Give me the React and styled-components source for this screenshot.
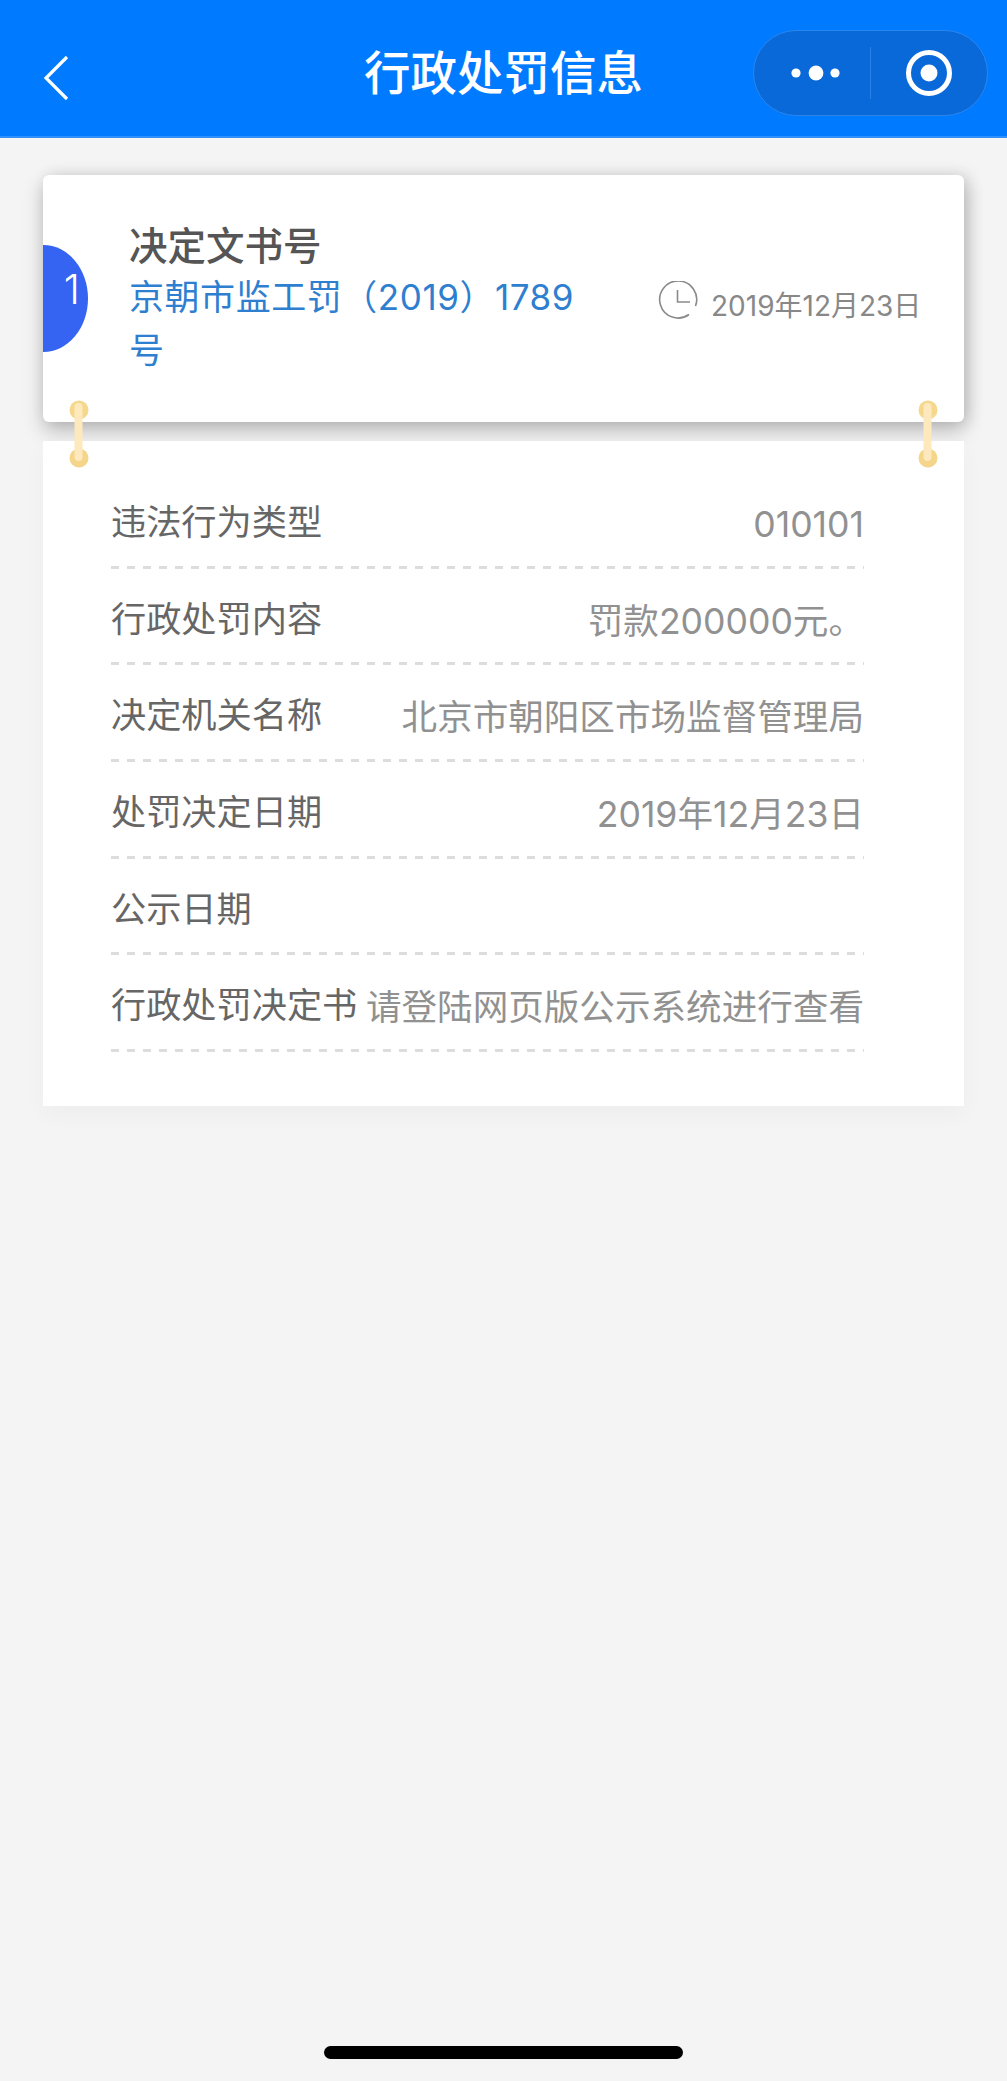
import styled, { createGlobalStyle } from "styled-components";

const rows = [
  ["违法行为类型", "010101"],
  ["行政处罚内容", "罚款200000元。"],
  ["决定机关名称", "北京市朝阳区市场监督管理局"],
  ["处罚决定日期", "2019年12月23日"],
  ["公示日期", ""],
  ["行政处罚决定书", "请登陆网页版公示系统进行查看"],
];

const Ring = ({ side }) => (
  <RingWrap $side={side}>
    <svg width="20" height="68" viewBox="0 0 20 68">
      <circle cx="10" cy="10" r="9.5" fill="#f5d88c" />
      <circle cx="10" cy="58" r="9.5" fill="#f5d58a" />
      <rect x="5.5" y="3" width="8" height="58" rx="4" fill="#fde9bd" />
    </svg>
  </RingWrap>
);

const App = () => {
  return (
    <Page>
      <GlobalStyle />
      <NavBar>
        <BackSlot>
          <svg width="26" height="46" viewBox="0 0 26 46">
            <path d="M24 2 L3 23 L24 44" fill="none" stroke="#fff" strokeWidth="3.2" />
          </svg>
        </BackSlot>
        <NavTitle>行政处罚信息</NavTitle>
        <CapsuleSlot>
          <Capsule>
            <CapsuleHalf>
              <MoreDots width="56" height="20" viewBox="0 0 56 20">
                <circle cx="8" cy="10" r="4.6" fill="#fff" />
                <circle cx="28" cy="10" r="7.4" fill="#fff" />
                <circle cx="47" cy="10" r="4.6" fill="#fff" />
              </MoreDots>
            </CapsuleHalf>
            <CapsuleDivider />
            <CapsuleHalf>
              <svg width="48" height="48" viewBox="0 0 48 48">
                <circle cx="24" cy="24" r="20.5" fill="none" stroke="#fff" strokeWidth="5" />
                <circle cx="24" cy="24" r="8.5" fill="#fff" />
              </svg>
            </CapsuleHalf>
          </Capsule>
        </CapsuleSlot>
      </NavBar>

      <Content>
        <Ring side="left" />
        <Ring side="right" />
        <SummaryCard>
          <IndexBadge>1</IndexBadge>
          <DocColumn>
            <DocLabel>决定文书号</DocLabel>
            <DocNumber>京朝市监工罚（2019）1789号</DocNumber>
          </DocColumn>
          <DateBlock>
            <ClockIcon width="40" height="40" viewBox="0 0 40 40">
              <path
                d="M31 33.5 A18.5 18.5 0 1 1 37.5 25"
                fill="none"
                stroke="#8a8a8a"
                strokeWidth="1.6"
              />
              <path d="M29 34.5 L27.5 35.3" fill="none" stroke="#8a8a8a" strokeWidth="1.6" />
              <path d="M19.5 9 V21 H32" fill="none" stroke="#8a8a8a" strokeWidth="1.6" />
            </ClockIcon>
            <DateText>2019年12月23日</DateText>
          </DateBlock>
        </SummaryCard>

        <DetailPanel>
          {rows.map(([label, value]) => (
            <Row key={label}>
              <RowLabel>{label}</RowLabel>
              <RowValue>{value}</RowValue>
            </Row>
          ))}
        </DetailPanel>
      </Content>

      <HomeIndicator />
    </Page>
  );
};
export default App;

const GlobalStyle = createGlobalStyle`
  body {
    margin: 0;
    background: #f4f4f4;
    font-family: "Inter", "Noto Sans CJK SC", sans-serif;
  }
`;

const Page = styled.div`
  min-height: 2081px;
  display: flex;
  flex-direction: column;
  background: #f4f4f4;
`;

const NavBar = styled.div`
  height: 138px;
  box-sizing: border-box;
  padding: 10px 19px 0 43px;
  display: grid;
  grid-template-columns: 1fr auto 1fr;
  align-items: center;
  background: #007aff;
  border-bottom: 2px solid #2f90fb;
`;

const BackSlot = styled.div`
  display: flex;
  align-items: center;
  margin-top: 10px;
`;

const NavTitle = styled.div`
  font-size: 46.5px;
  line-height: 60px;
  font-weight: 500;
  color: #fff;
  transform: translateX(-12px);
`;

const CapsuleSlot = styled.div`
  display: flex;
  justify-content: flex-end;
`;

const Capsule = styled.div`
  width: 235px;
  height: 86px;
  box-sizing: border-box;
  display: flex;
  align-items: center;
  border-radius: 43px;
  background: #0a69d8;
  border: 1px solid #2a86ee;
`;

const CapsuleHalf = styled.div`
  flex: 1;
  display: flex;
  align-items: center;
  justify-content: center;
`;

const MoreDots = styled.svg`
  margin-left: 8px;
`;

const CapsuleDivider = styled.div`
  width: 1px;
  height: 52px;
  background: #2a80e4;
`;

const Content = styled.div`
  position: relative;
  margin: 37px 43px 0;
  display: flex;
  flex-direction: column;
  gap: 19px;
`;

const RingWrap = styled.div`
  position: absolute;
  top: 225px;
  ${({ $side }) => ($side === "left" ? "left: 26px;" : "right: 26px;")}
  z-index: 2;
  width: 20px;
  height: 68px;
`;

const SummaryCard = styled.div`
  height: 247px;
  display: flex;
  align-items: center;
  background: #fff;
  border-radius: 6px;
  box-shadow: 0 9px 20px rgba(0, 0, 0, 0.22), 5px 0 16px rgba(0, 0, 0, 0.12);
`;

const IndexBadge = styled.div`
  width: 45px;
  height: 107px;
  flex: none;
  box-sizing: border-box;
  padding: 22px 8px 0 0;
  text-align: right;
  font-size: 41px;
  line-height: 44px;
  font-weight: 300;
  color: #fff;
  background: #3563f2;
  border-radius: 0 45px 45px 0 / 0 54px 54px 0;
`;

const DocColumn = styled.div`
  width: 460px;
  flex: none;
  margin-left: 41px;
`;

const DocLabel = styled.div`
  font-size: 38.5px;
  line-height: 53px;
  font-weight: 500;
  color: #555;
`;

const DocNumber = styled.div`
  font-size: 35px;
  line-height: 53px;
  letter-spacing: 0.55px;
  margin-top: -2px;
  color: #2f7fd0;
`;

const DateBlock = styled.div`
  display: flex;
  align-items: center;
  margin-left: 69px;
  gap: 13px;
`;

const ClockIcon = styled.svg`
  margin-top: 5px;
`;

const DateText = styled.span`
  font-size: 28px;
  line-height: 36px;
  color: #888;
  margin-top: 14px;
  white-space: nowrap;
`;

const DetailPanel = styled.div`
  background: #fff;
  padding: 31px 100px 54px 68px;
  box-shadow: 0 8px 24px rgba(0, 0, 0, 0.03);
`;

const Row = styled.div`
  height: 96.7px;
  box-sizing: border-box;
  padding-top: 25px;
  display: flex;
  justify-content: space-between;
  gap: 8px;
  background-image: linear-gradient(to right, #ddd 50%, transparent 50%);
  background-size: 16px 3px;
  background-repeat: repeat-x;
  background-position: left bottom;
`;

const RowLabel = styled.div`
  flex: none;
  font-size: 35.2px;
  line-height: 50px;
  color: #666;
`;

const RowValue = styled.div`
  font-size: 35.6px;
  line-height: 50px;
  margin-top: 3px;
  color: #919191;
  text-align: right;
  white-space: nowrap;
`;

const HomeIndicator = styled.div`
  width: 359px;
  height: 13px;
  margin: auto auto 22px;
  border-radius: 7px;
  background: #000;
`;
